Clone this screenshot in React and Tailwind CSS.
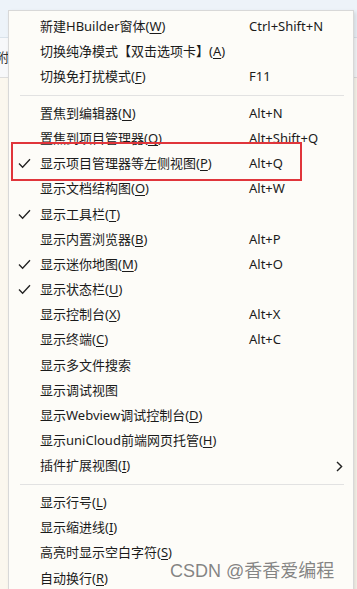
import React from "react";

const items = [
  { label: "新建HBuilder窗体", key: "W", shortcut: "Ctrl+Shift+N" },
  { label: "切换纯净模式【双击选项卡】", key: "A" },
  { label: "切换免打扰模式", key: "F", shortcut: "F11" },
  { sep: true },
  { label: "置焦到编辑器", key: "N", shortcut: "Alt+N" },
  { label: "置焦到项目管理器", key: "Q", shortcut: "Alt+Shift+Q" },
  { label: "显示项目管理器等左侧视图", key: "P", shortcut: "Alt+Q", checked: true },
  { label: "显示文档结构图", key: "O", shortcut: "Alt+W" },
  { label: "显示工具栏", key: "T", checked: true },
  { label: "显示内置浏览器", key: "B", shortcut: "Alt+P" },
  { label: "显示迷你地图", key: "M", shortcut: "Alt+O", checked: true },
  { label: "显示状态栏", key: "U", checked: true },
  { label: "显示控制台", key: "X", shortcut: "Alt+X" },
  { label: "显示终端", key: "C", shortcut: "Alt+C" },
  { label: "显示多文件搜索" },
  { label: "显示调试视图" },
  { label: "显示Webview调试控制台", key: "D" },
  { label: "显示uniCloud前端网页托管", key: "H" },
  { label: "插件扩展视图", key: "I", submenu: true },
  { sep: true },
  { label: "显示行号", key: "L" },
  { label: "显示缩进线", key: "I" },
  { label: "高亮时显示空白字符", key: "S" },
  { label: "自动换行", key: "R" },
];

function Check() {
  return (
    <svg width="13" height="11" viewBox="0 0 13 11" fill="none">
      <path d="M1 5.5 L4.6 9.3 L12 1.2" stroke="#222" strokeWidth="1.3" />
    </svg>
  );
}

function Chevron() {
  return (
    <svg width="7" height="11" viewBox="0 0 7 11" fill="none">
      <path d="M1 1 L5.6 5.5 L1 10" stroke="#222" strokeWidth="1.4" />
    </svg>
  );
}

export default function App() {
  return (
    <div
      className="relative w-[357px] h-[589px] overflow-hidden bg-[#fbf7ee] text-[13px] text-[#1b1b1b]"
      style={{ fontFamily: '"Noto Sans", "Noto Sans CJK SC", sans-serif' }}
    >
      {/* page behind the popup */}
      <div className="h-[38px] bg-[#edf3f9] border-b border-[#d9e2ea]" />
      <div className="h-[40px] bg-[#f7f8fa] border-b border-[#dcdcdc] flex items-center">
        <span className="-ml-[4px] text-[13px] text-[#333]">附</span>
      </div>

      {/* popup menu */}
      <div className="absolute left-[8px] top-[10px] w-[346px] h-[600px] bg-[#fdfcf8] border border-[#d8d8d8] shadow-[2px_2px_4px_rgba(0,0,0,0.12)] pt-[3px]">
        {items.map((it, i) =>
          it.sep ? (
            <div key={i} className="h-[11.4px] flex items-center pl-[11px] pr-[9px]">
              <div className="h-px w-full bg-[#e2e2e2]" />
            </div>
          ) : (
            <div key={i} className="h-[25.2px] flex items-center whitespace-nowrap">
              <div className="w-[31px] pl-[9px] flex items-center">
                {it.checked && <Check />}
              </div>
              <div className="w-[209px]">
                {it.label}
                {it.key && (
                  <>
                    (<span className="underline underline-offset-2">{it.key}</span>)
                  </>
                )}
              </div>
              <div className="flex-1">{it.shortcut}</div>
              {it.submenu && (
                <div className="pr-[10px] flex items-center">
                  <Chevron />
                </div>
              )}
            </div>
          )
        )}
      </div>

      {/* annotation box */}
      <div className="absolute left-[11px] top-[142px] w-[291px] h-[39px] border-2 border-[#e0353b]" />

      {/* watermark */}
      <div
        className="absolute left-[170px] top-[558px] text-[18px] text-[rgba(110,110,110,0.85)] whitespace-nowrap"
        style={{ fontFamily: '"Liberation Sans", "Noto Sans CJK SC", sans-serif' }}
      >
        CSDN @香香爱编程
      </div>
    </div>
  );
}
